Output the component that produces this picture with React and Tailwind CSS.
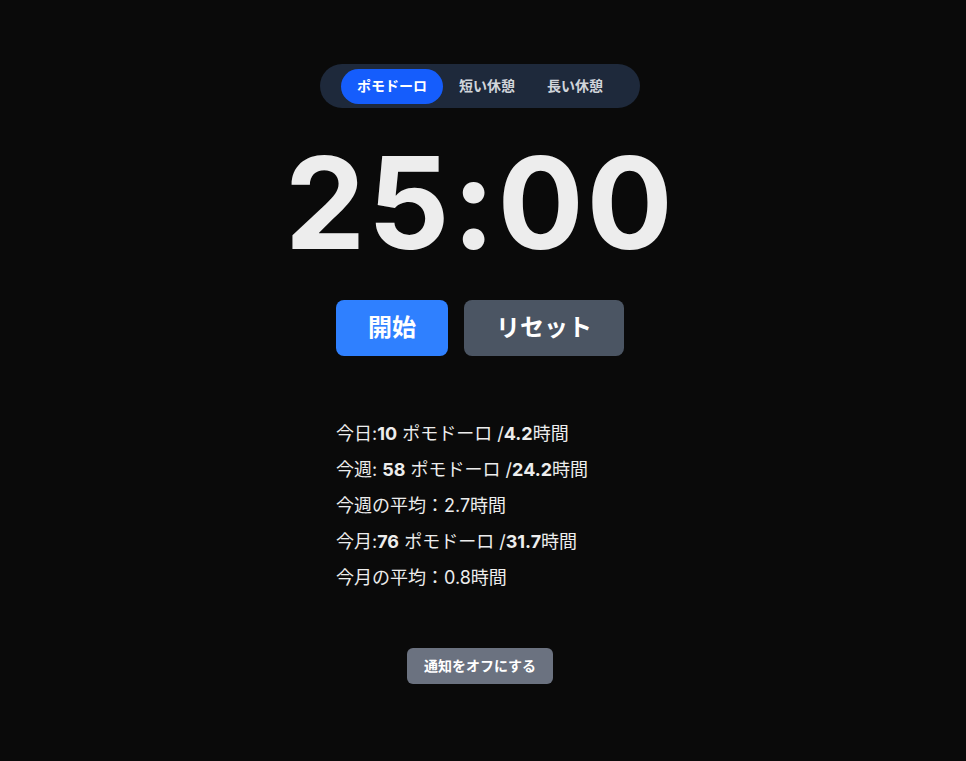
import React, { useState } from 'react';

const font = { fontFamily: 'Inter, "Noto Sans CJK JP", sans-serif' };

const tabs = ['ポモドーロ', '短い休憩', '長い休憩'];

const stats = [
  <>今日:<b>10</b> ポモドーロ /<b>4.2</b>時間</>,
  <>今週: <b>58</b> ポモドーロ /<b>24.2</b>時間</>,
  <>今週の平均：2.7時間</>,
  <>今月:<b>76</b> ポモドーロ /<b>31.7</b>時間</>,
  <>今月の平均：0.8時間</>,
];

export default function App() {
  const [tab, setTab] = useState(0);

  return (
    <div className="min-h-[761px] bg-[#0a0a0a] text-[#ededed]" style={font}>
      <div className="w-[960px] flex flex-col items-center pt-16">
        <div className="flex items-center h-11 px-[21px] rounded-full bg-[#1e293b]">
          {tabs.map((t, i) => (
            <button
              key={t}
              onClick={() => setTab(i)}
              className={
                i === tab
                  ? 'h-[35px] px-4 rounded-full bg-[#155dfc] text-white text-sm font-bold'
                  : 'h-[35px] px-4 rounded-full text-[#d1d5db] text-sm font-bold'
              }
            >
              {t}
            </button>
          ))}
        </div>

        <div className="mt-[31px] text-[128px] leading-none font-bold tracking-[0.02em]">25:00</div>

        <div className="mt-[33px] flex gap-4">
          <button className="w-28 h-14 rounded-lg bg-[#2f80ff] text-white text-2xl font-bold">開始</button>
          <button className="w-40 h-14 rounded-lg bg-[#4b5563] text-white text-2xl font-bold">リセット</button>
        </div>

        <div className="mt-16 w-72 flex flex-col gap-2 text-lg leading-7 text-[#ededed]">
          {stats.map((s, i) => (
            <p key={i}>{s}</p>
          ))}
        </div>

        <button className="mt-14 h-9 px-[17px] rounded-md bg-[#6b7280] text-white text-sm font-semibold">
          通知をオフにする
        </button>
      </div>
    </div>
  );
}
